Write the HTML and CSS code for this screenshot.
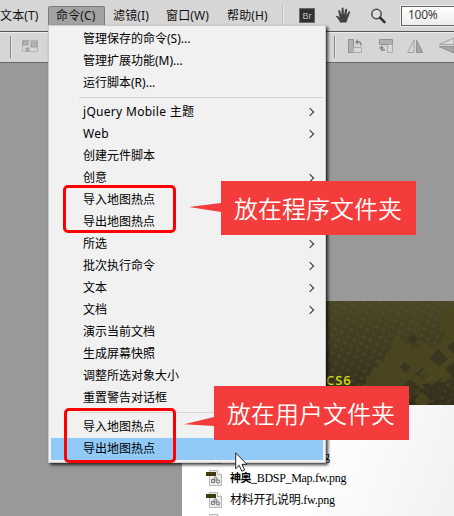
FILE: index.html
```html
<!DOCTYPE html>
<html lang="zh-CN">
<head>
<meta charset="utf-8">
<title>命令</title>
<link rel="stylesheet" href="styles.css">
</head>
<body>
<div class="app">
  <header class="menubar">
    <span class="top text">文本(T)</span>
    <span class="top command">命令(C)</span>
    <span class="top filter">滤镜(I)</span>
    <span class="top window">窗口(W)</span>
    <span class="top help">帮助(H)</span>
    <i class="divider"></i>
    <span class="bridge">Br</span>
    <svg class="hand" width="17" height="17" viewBox="0 0 17 17"><path d="M5 15.500C4 12.500 2 11 .8 9.300c.6-1 1.700-.7 2.700.3l1.200 1L3.200 4c0-1.200 1.500-1.400 1.900-.2L6.500 8 6.600 1.500c.2-1.200 1.900-1.200 2 0L9 8l1.200-5.500c.4-1.200 2-.8 1.900.3L11.400 8.700l2-4c.6-1 2.100-.3 1.600.9l-2.200 6c-.4 1.500-1 2.400-1.300 3.900z" fill="#414141"/></svg>
    <svg class="lens" width="17" height="17" viewBox="0 0 17 17"><circle cx="6.500" cy="6" r="4.700" fill="#dedede" stroke="#4a4a4a" stroke-width="1.500"/><path d="M10 9.700l4.500 4.500" stroke="#303030" stroke-width="2.600" stroke-linecap="round"/></svg>
    <span class="zoom">100%</span>
  </header>
  <div class="toolbar">
    <i class="stub"></i><i class="divider d1"></i>
    <svg class="group" width="17" height="13" viewBox="0 0 17 13"><path d="M.5 .5h15v11H.5z" fill="none" stroke="#929292" stroke-dasharray="1 1"/><path d="M1 1h5v4H1zM9 2h6v5H9zM4 8h3v3H4z" fill="#b5b5b5" stroke="#999"/></svg>
    <i class="divider d2"></i>
    <svg class="t1" width="16" height="16" viewBox="0 0 16 16"><path d="M.5 1.500h5v13h-5z" fill="#b0b0b0" stroke="#929292"/><path d="M5.500 9.500h8v5h-8z" fill="#d9d9d9" stroke="#aaa"/><path d="M8 4h3q2 0 2 3.500" fill="none" stroke="#888" stroke-width="1.500"/><path d="M7 4l3-3v6z" fill="#888"/></svg>
    <svg class="t2" width="16" height="16" viewBox="0 0 16 16"><path d="M1.500 1.500h13v5h-13z" fill="#b0b0b0" stroke="#929292"/><path d="M9.500 6.500h5v8h-5z" fill="#d9d9d9" stroke="#aaa"/><path d="M3.500 9v3H7" fill="none" stroke="#888" stroke-width="1.500"/><path d="M.5 10.500l3-3 3 3z" fill="#888"/></svg>
    <svg class="t3" width="17" height="16" viewBox="0 0 17 16"><path d="M.7 14.500L7 2v12.500z" fill="#d8d8d8" stroke="#a3a3a3"/><path d="M9.500 14.500V2l6.300 12.500z" fill="#a6a6a6" stroke="#929292"/></svg>
    <svg class="t4" width="17" height="17" viewBox="0 0 17 17"><path d="M1 7.500L16 1v6.500z" fill="#d8d8d8" stroke="#a3a3a3"/><path d="M1 9.500h15V16z" fill="#a6a6a6" stroke="#929292"/></svg>
  </div>
  <main class="workspace">
    <section class="welcome">
      <div class="banner">
        <svg class="texture" width="272" height="104" viewBox="0 0 272 104">
          <defs>
            <pattern id="dots" width="10" height="11" patternUnits="userSpaceOnUse" patternTransform="rotate(-18)"><path d="M0 2l2.500-1.500L4 3 2 4zM5 7.500L7.500 6 9 8.500l-2 1z" fill="#57512a" opacity=".55"/></pattern>
          </defs>
          <path d="M0 0h272v104H0z" fill="url(#dots)"/>
          <path d="M272 5l-13 12-1 9 6 7-5 9-9 4-14-8-3-14 3-8 5 3-1-4 3 1-4-11-2 2 1 9-4-1-3 14 8 18-12-1-7-7-3-9-3 10-3-1-2 12-5 1-2 9-5-2-1 9-5-2-2 10-5-2v9l-4-1v12l-4 10h34l11-7 14-4 6-10 13-1 11-12 11-2z" fill="#4c4720" opacity=".85"/>
          <path d="M218 66l5-5 6 5-5 6zM220 86l8-8 10 8-7 9-7-2zM233 73l9-7 8 8-7 5zM247 57l9-9 10 10-9 7zM263 68l9-7v16l-9-3zM265 46l7-6v13zM245 90l10-10 9 10-9 9zM207 98l10-9 8 9-6 6h-9zM267 96l5-5v11zM226 38l6-5 4 5-5 5zM253 104l7-5 7 5z" fill="#373320" opacity=".85"/>
          <path d="M237 73l9-9 10 10-9 8zM254 73l7-7 9 8-7 8zM233 99l7-8 9 9-5 4h-9z" fill="#4d481f" opacity=".75"/>
        </svg>
        <span class="version">CS6</span>
      </div>
      <ul class="files">
        <li class="first"><svg class="file"><use href="#doc"/></svg><span class="tail">fw.png</span></li>
        <li><svg class="file"><use href="#doc"/></svg><span class="fname"><b>神奥</b>_BDSP_Map.fw.png</span></li>
        <li><svg class="file"><use href="#doc"/></svg><span class="fname cn">材料开孔说明.fw.png</span></li>
        <li><svg class="file"><use href="#doc"/></svg></li>
      </ul>
    </section>
  </main>

  <nav class="menu">
    <div class="item"><span>管理保存的命令(S)...</span></div>
    <div class="item"><span>管理扩展功能(M)...</span></div>
    <div class="item"><span>运行脚本(R)...</span></div>
    <hr>
    <div class="item sub"><span class="latin">jQuery Mobile 主题</span></div>
    <div class="item sub"><span class="latin">Web</span></div>
    <div class="item"><span>创建元件脚本</span></div>
    <div class="item sub"><span>创意</span></div>
    <div class="item"><span>导入地图热点</span></div>
    <div class="item"><span>导出地图热点</span></div>
    <div class="item sub"><span>所选</span></div>
    <div class="item sub"><span>批次执行命令</span></div>
    <div class="item sub"><span>文本</span></div>
    <div class="item sub"><span>文档</span></div>
    <div class="item"><span>演示当前文档</span></div>
    <div class="item"><span>生成屏幕快照</span></div>
    <div class="item"><span>调整所选对象大小</span></div>
    <div class="item"><span>重置警告对话框</span></div>
    <hr>
    <div class="item"><span>导入地图热点</span></div>
    <div class="item active"><span>导出地图热点</span></div>
  </nav>

  <div class="frame upper"></div>
  <div class="frame lower"></div>
  <div class="callout program">放在程序文件夹</div>
  <div class="callout user">放在用户文件夹</div>
  <svg class="cursor" width="14" height="20" viewBox="0 0 14 20"><path d="M.7 1v15.700l3.500-3.400 2.600 5.900 2.800-1.200L7 12.300h5z" fill="#fff" stroke="#1c2430"/></svg>
</div>
<svg class="defs"><symbol id="doc" viewBox="0 0 17 16"><path d="M3.500 .5h8l4 4v11h-12z" fill="#ececec" stroke="#b9b9b9"/><path d="M11.500 .5v4h4" fill="#fff" stroke="#b9b9b9"/><path d="M0 2h10v4H0z" fill="#3e3a0c"/><g fill="#d9d9d9" stroke="#777"><path d="M5.500 9.500h3v3h-3z"/><circle cx="9.500" cy="8.500" r="1.500"/><circle cx="12" cy="11.500" r="1.700"/></g></symbol></svg>
</body>
</html>
```

FILE: styles.css
```css
* { box-sizing: border-box; }
body { margin: 0; overflow: hidden; }
.app {
  position: relative;
  width: 454px;
  height: 516px;
  overflow: hidden;
  display: flex;
  flex-direction: column;
  background: #999;
  color: #111;
  font: 12px/22px "Noto Sans", "Noto Sans CJK SC", sans-serif;
}
.menubar, .toolbar { display: flex; flex: none; align-items: flex-start; background: #d6d6d6; }
.menubar { height: 31px; white-space: nowrap; }
.top { height: 20px; margin-top: 6px; line-height: 19px; flex: none; letter-spacing: .15px; }
.text { width: 48px; }
.command { width: 57px; padding-left: 7px; background: #a2a2a2; border: 1px solid #7c7c7c; border-bottom: 0; border-radius: 2px 2px 0 0; line-height: 18px; }
.filter { width: 61px; padding-left: 8px; }
.window { width: 61px; }
.help { width: 55px; }
.divider { flex: none; width: 2px; height: 21px; margin-top: 5px; background: #bcbcbc; border-right: 1px solid #e9e9e9; }
.bridge {
  flex: none; width: 16px; height: 15px; margin: 8px 0 0 15px;
  border: 1px solid #686868; background: #303030; color: #c0c0c0;
  font: 9px/14px "Liberation Sans", sans-serif; text-align: center;
}
.hand { flex: none; margin: 7px 0 0 20px; }
.lens { flex: none; margin: 8px 0 0 18px; }
.zoom {
  flex: none; width: 70px; height: 20px; margin: 6px 0 0 14px; padding-left: 6px;
  background: linear-gradient(#fff, #ededed); border: 1px solid #626262; box-shadow: 0 0 0 1px #eee;
  color: #3c3c3c; font: 12px/16px "Noto Sans", sans-serif; letter-spacing: -.3px;
}
.toolbar { height: 32px; border-top: 1px solid #555; border-bottom: 1px solid #666; box-shadow: inset 0 1px #ededed; }
.stub { width: 1px; height: 13px; margin-top: 9px; background: #bbb; }
.d1 { margin-left: 10px; height: 22px; background: #858585; margin-top: 4px; }
.group { flex: none; margin: 8px 0 0 10px; }
.d2 { margin-left: 295px; height: 22px; background: #858585; margin-top: 4px; }
.t1, .t2, .t3, .t4 { flex: none; margin-top: 6px; }
.t1 { margin-left: 12px; }
.t2 { margin-left: 14px; }
.t3 { margin-left: 13px; }
.t4 { margin-left: 14px; margin-top: 5px; }
.workspace { flex: 1; padding: 238px 0 0 182px; background: #999; }
.welcome { height: 215px; background: linear-gradient(110deg, #fff 50%, #f1f1f1); }
.banner { position: relative; height: 104px; background: linear-gradient(#4b4726, #342e1d); }
.texture { display: block; }
.version { position: absolute; left: 144px; top: 69px; color: #d2da12; font: 600 13px/20px "Open Sans", sans-serif; letter-spacing: .9px; }
.files { margin: 0; padding: 43px 0 0 24px; list-style: none; }
.files li { display: flex; height: 22px; align-items: flex-start; }
.file { flex: none; width: 17px; height: 16px; }
.fname, .tail { margin: -3px 0 0 7px; font: 12px/22px "Liberation Serif", "Noto Sans CJK SC", serif; white-space: nowrap; color: #000; }
.fname { letter-spacing: -.3px; }
.cn { letter-spacing: -.25px; }
.fname b { font-size: 11px; letter-spacing: -.5px; }
.tail { width: 100px; text-align: right; }
.menu {
  position: absolute; left: 48px; top: 25px; width: 278px; height: 438px; padding: 2px;
  background: #f1f1f1; border: 1px solid #cbcbcb;
  box-shadow: 2px 2px 3px rgba(0, 0, 0, .75);
}
.item { position: relative; display: flex; justify-content: space-between; height: 22px; padding: 0 10px 0 32px; line-height: 22px; color: #000; }
.item.active { background: #91c9f7; }
.latin { letter-spacing: .3px; }
.sub::after { content: ""; width: 5px; height: 5px; margin-top: 8px; border: solid #333; border-width: 1px 1px 0 0; transform: rotate(45deg); }
hr { height: 1px; margin: 3px 0 3px 28px; border: 0; background: #d5d5d5; }
.frame { position: absolute; border: 3px solid #f00; border-radius: 5px; }
.upper { left: 63px; top: 185px; width: 113px; height: 48px; }
.lower { left: 64px; top: 408px; width: 112px; height: 55px; }
.callout {
  position: absolute; width: 195px; height: 54px; padding-left: 13px;
  background: #f33c3b; color: #fff; font: 350 24px/53px "Noto Sans CJK SC", sans-serif; white-space: nowrap;
}
.callout::before { content: ""; position: absolute; right: 100%; background: inherit; }
.program { left: 221px; top: 181px; }
.program::before { width: 32px; height: 9px; top: 22px; clip-path: polygon(0 45%, 100% 0, 100% 100%); }
.user { left: 214px; top: 386px; }
.user::before { width: 30px; height: 9px; top: 31px; clip-path: polygon(0 80%, 100% 0, 100% 100%); }
.cursor { position: absolute; left: 235px; top: 452px; }
.defs { position: absolute; width: 0; height: 0; }
```
